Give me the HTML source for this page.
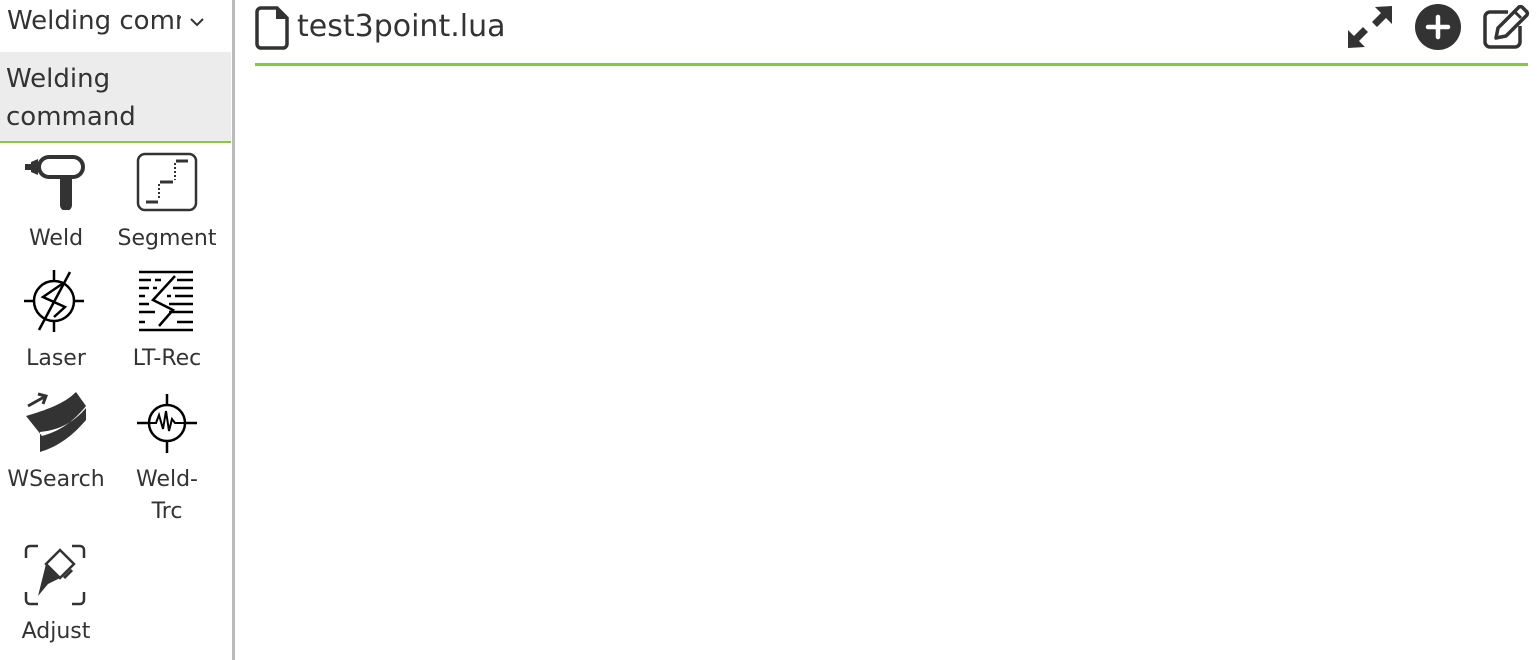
<!DOCTYPE html>
<html><head><meta charset="utf-8"><style>
body{margin:0;width:1537px;height:660px;overflow:hidden;background:#fff;font-family:"DejaVu Sans","Liberation Sans",sans-serif;color:#333;position:relative}
.abs{position:absolute}
.lbl{position:absolute;font-size:22px;text-align:center;width:112px;line-height:32px}
</style></head><body>
<div class="abs" style="left:0;top:0;width:232px;height:660px;border-right:3px solid #bbb"></div>
<div class="abs" style="left:7px;top:6px;font-size:26px;white-space:nowrap;width:174px;overflow:hidden">Welding command</div>
<svg class="abs" style="left:188px;top:16px" width="18" height="12" viewBox="0 0 18 12"><path d="M3 3l6 6 6-6" fill="none" stroke="#333" stroke-width="2"/></svg>
<div class="abs" style="left:0;top:52px;width:231px;height:89px;background:#ececec;border-bottom:2px solid #8cc63f"></div>
<div class="abs" style="left:6px;top:60px;font-size:26px;line-height:38px">Welding<br>command</div>

<svg class="abs" style="left:24px;top:154px" width="62" height="56" viewBox="0 0 62 56">
<path d="M1 10h6v6H1z M7 8l7-3v16l-7-3z" fill="#333"/>
<rect x="15" y="3" width="44" height="20" rx="10" fill="none" stroke="#333" stroke-width="4"/>
<path d="M36 23h12v28a6 6 0 0 1-12 0z" fill="#333"/></svg>
<div class="lbl" style="left:0;top:223px">Weld</div>
<svg class="abs" style="left:136px;top:152px" width="62" height="60" viewBox="0 0 62 60">
<rect x="2" y="2" width="58" height="56" rx="7" fill="none" stroke="#333" stroke-width="2.5"/>
<path d="M10 50h12M24 30h13M40 9h12" stroke="#333" stroke-width="3"/>
<path d="M23 32v16M39 11v17" stroke="#333" stroke-width="2" stroke-dasharray="2 2"/></svg>
<div class="lbl" style="left:111px;top:223px">Segment</div>
<svg class="abs" style="left:24px;top:270px" width="62" height="62" viewBox="0 0 62 62">
<circle cx="30" cy="31" r="20" fill="none" stroke="#000" stroke-width="2.5"/>
<path d="M0 31h10M50 31h10M30 0v11M30 51v11M15 60L46 2M38 14L19 27l22 10-11 10" fill="none" stroke="#000" stroke-width="2.5"/></svg>
<div class="lbl" style="left:0;top:343px">Laser</div>
<svg class="abs" style="left:139px;top:270px" width="56" height="62" viewBox="0 0 56 62">
<g stroke="#000" stroke-width="2.5"><path d="M0 2h54M0 60h54"/>
<path d="M0 10h12M16 10h6M38 10h16M0 18h10M14 18h4M34 18h20M0 26h6M28 26h4M36 26h18M0 34h10M30 34h24M0 42h16M30 42h24M0 52h6M38 52h16" />
<path d="M36 6L14 30l20 10-14 16" fill="none"/></g></svg>
<div class="lbl" style="left:111px;top:343px">LT-Rec</div>
<svg class="abs" style="left:24px;top:390px" width="62" height="62" viewBox="0 0 62 62">
<path d="M2 26C22 20 40 14 52 2l10 14C52 28 40 40 18 46z M16 42v20C36 56 50 44 62 30V18C50 32 36 40 16 42z" fill="#333"/>
<path d="M4 16l18-10M14 4l8 2-3 8" fill="none" stroke="#333" stroke-width="3"/></svg>
<div class="lbl" style="left:0;top:464px">WSearch</div>
<svg class="abs" style="left:137px;top:394px" width="60" height="60" viewBox="0 0 60 60">
<circle cx="30" cy="29" r="18" fill="none" stroke="#000" stroke-width="2.5"/>
<path d="M0 29h12M48 29h12M30 0v11M30 47v12" stroke="#000" stroke-width="2.5"/>
<path d="M13 29h6l3-8 4 14 3-18 3 20 3-12 3 4h10" fill="none" stroke="#000" stroke-width="2"/></svg>
<div class="lbl" style="left:111px;top:464px;line-height:32px">Weld-<br>Trc</div>
<svg class="abs" style="left:24px;top:544px" width="62" height="62" viewBox="0 0 62 62">
<path d="M2 14V6a4 4 0 0 1 4-4h8M48 2h8a4 4 0 0 1 4 4v8M60 48v8a4 4 0 0 1-4 4h-8M14 60H6a4 4 0 0 1-4-4v-8" fill="none" stroke="#333" stroke-width="2.5"/>
<path d="M22 20L36 6l14 14-14 14z" fill="#fff" stroke="#333" stroke-width="2.5"/>
<path d="M22 20l14 14-12 6-10 12z" fill="#333"/>
<path d="M40 34l8-8" stroke="#333" stroke-width="3"/></svg>
<div class="lbl" style="left:0;top:616px">Adjust</div>

<svg class="abs" style="left:255px;top:6px" width="34" height="44" viewBox="0 0 34 44">
<path d="M6 2h16l10 10v26a4 4 0 0 1-4 4H6a4 4 0 0 1-4-4V6a4 4 0 0 1 4-4z" fill="none" stroke="#333" stroke-width="3.5"/>
<path d="M21 2v11h11z" fill="#333"/></svg>
<div class="abs" style="left:297px;top:9px;font-size:30px;color:#333">test3point.lua</div>
<div class="abs" style="left:255px;top:63px;width:1273px;height:3px;background:#8cc63f"></div>
<svg class="abs" style="left:1346px;top:4px" width="48" height="46" viewBox="0 0 48 46">
<g fill="#333"><path d="M46 2v18l-6-6-9 9-5-5 9-9-6-6z"/><path d="M2 44V26l6 6 9-9 5 5-9 9 6 6z"/></g></svg>
<svg class="abs" style="left:1415px;top:4px" width="46" height="46" viewBox="0 0 46 46">
<circle cx="23" cy="23" r="23" fill="#333"/><path d="M23 13v20M13 23h20" stroke="#fff" stroke-width="4.5" stroke-linecap="round"/></svg>
<svg class="abs" style="left:1482px;top:4px" width="48" height="46" viewBox="0 0 48 46">
<path d="M26 8H8a5 5 0 0 0-5 5v25a5 5 0 0 0 5 5h25a5 5 0 0 0 5-5V22" fill="none" stroke="#333" stroke-width="3.5"/>
<path d="M14 34l2-10L36 4a3 3 0 0 1 5 0l3 3a3 3 0 0 1 0 5L24 32z" fill="none" stroke="#333" stroke-width="3.5" stroke-linejoin="round"/>
<path d="M33 8l6 6" stroke="#333" stroke-width="3"/></svg>
</body></html>
